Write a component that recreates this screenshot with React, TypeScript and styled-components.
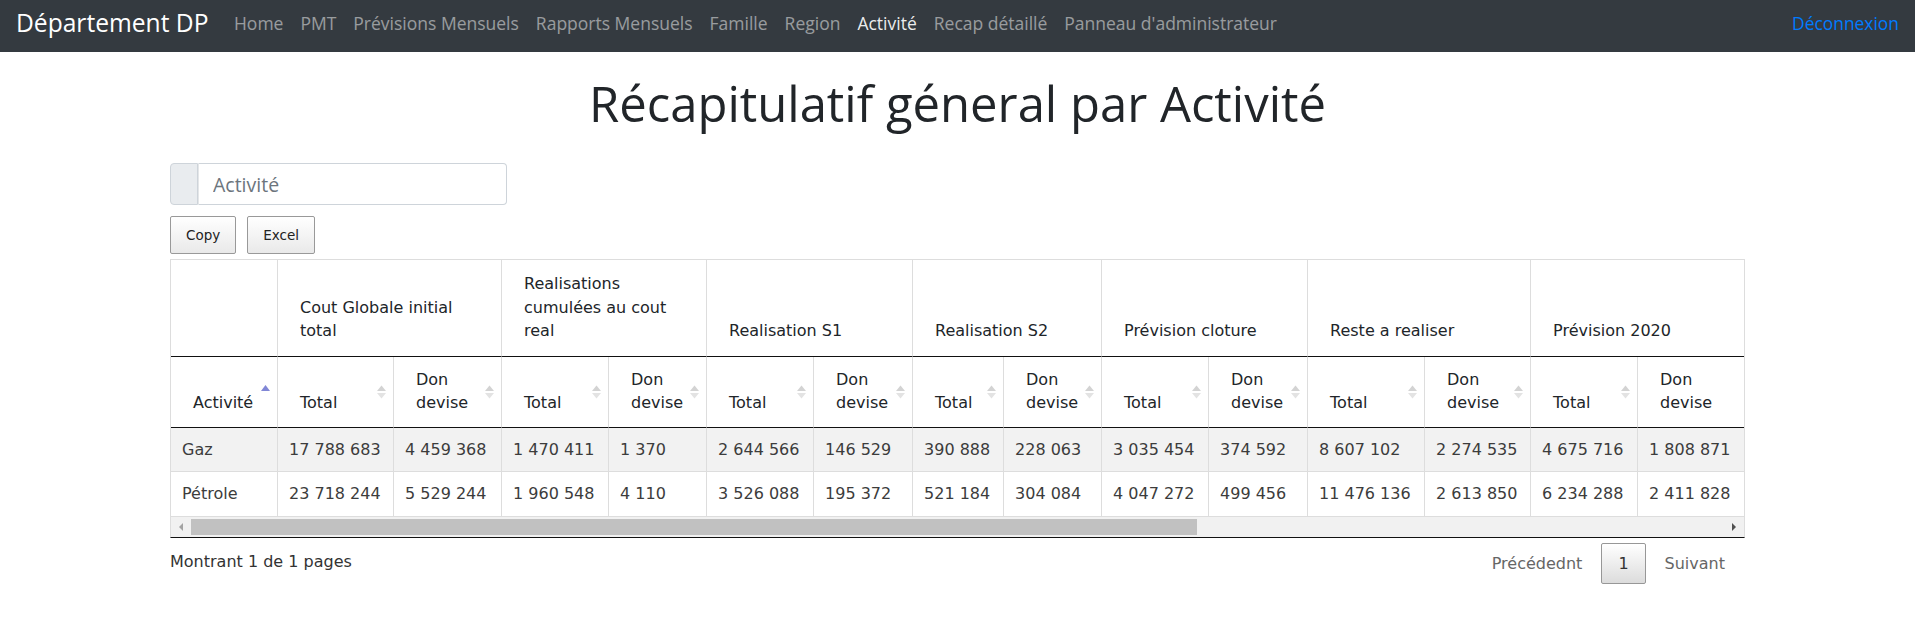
import React from 'react';
import styled, { createGlobalStyle } from 'styled-components';

const GlobalStyle = createGlobalStyle`
  html, body { margin: 0; padding: 0; background: #fff; }
  body { font-family: "Open Sans", "DejaVu Sans", sans-serif; }
  *, *::before, *::after { box-sizing: border-box; }
`;

/* ---------- Navbar ---------- */
const Navbar = styled.nav`
  height: 52px;
  background: #343a40;
  display: flex;
  align-items: center;
  padding: 0 16px 5px;
  font-family: "Open Sans", sans-serif;
`;

const Brand = styled.a`
  font-size: 24.6px;
  color: #fff;
  margin-right: 17px;
  white-space: nowrap;
  text-decoration: none;
  line-height: 1.5;
`;

const NavList = styled.ul`
  display: flex;
  list-style: none;
  margin: 0;
  padding: 0;
  flex: 1;
`;

const NavLink = styled.a<{ $active?: boolean }>`
  display: block;
  padding: 0 8.5px;
  font-size: 17.5px;
  line-height: 1.5;
  white-space: nowrap;
  text-decoration: none;
  color: ${(p) => (p.$active ? 'rgba(255,255,255,0.92)' : 'rgba(255,255,255,0.5)')};
`;

const Logout = styled.a`
  font-size: 17.4px;
  line-height: 1.5;
  color: #007bff;
  text-decoration: none;
`;

/* ---------- Page ---------- */
const Main = styled.main`
  width: 1575px;
  margin: 0 auto;
`;

const Title = styled.h1`
  font-family: "Open Sans", sans-serif;
  font-weight: 400;
  font-size: 49px;
  line-height: 57px;
  color: #212529;
  text-align: center;
  margin: 23px 0 31px;
`;

const InputGroup = styled.div`
  display: flex;
  width: 337px;
  height: 42px;
`;

const Addon = styled.span`
  width: 28px;
  background: #e9ecef;
  border: 1px solid #ced4da;
  border-radius: 4px 0 0 4px;
`;

const SearchInput = styled.input`
  flex: 1;
  min-width: 0;
  border: 1px solid #ced4da;
  border-left-color: #e4e6e8;
  border-radius: 0 4px 4px 0;
  padding: 0 14px;
  font-family: "Open Sans", sans-serif;
  font-size: 19.5px;
  color: #495057;
  outline: none;
  &::placeholder { color: #6c757d; }
`;

const ButtonBar = styled.div`
  display: flex;
  gap: 11px;
  margin: 11px 0 5px;
`;

const DtButton = styled.button`
  font-family: "DejaVu Sans", sans-serif;
  font-size: 13.5px;
  font-weight: 400;
  line-height: 20px;
  padding: 8px 15px;
  border: 1px solid #999;
  border-radius: 2px;
  background: linear-gradient(to bottom, #ffffff 0%, #e9e9e9 100%);
  color: #222;
  cursor: pointer;
`;

/* ---------- Table ---------- */
const ScrollBox = styled.div`
  border: 1px solid #ddd;
  border-bottom: 1px solid #111;
  overflow: hidden;
`;

const Table = styled.table`
  table-layout: fixed;
  width: 1597px;
  border-collapse: separate;
  border-spacing: 0;
  font-family: "DejaVu Sans", sans-serif;
  font-size: 16px;
  line-height: 23.5px;
`;

const Col = styled.col<{ $w: number }>`
  width: ${(p) => p.$w}px;
`;

const GroupTh = styled.th`
  vertical-align: bottom;
  text-align: left;
  font-weight: normal;
  color: #212529;
  padding: 12px 22px 13px;
  border-right: 1px solid #ddd;
  border-bottom: 1px solid #111;
`;

const SortTh = styled.th`
  position: relative;
  vertical-align: bottom;
  text-align: left;
  font-weight: normal;
  color: #212529;
  padding: 11px 30px 12px 22px;
  border-right: 1px solid #ddd;
  border-bottom: 1px solid #111;
  white-space: normal;
`;

const SortIcon = styled.svg`
  position: absolute;
  right: 6px;
  top: 50%;
  transform: translateY(-50%);
  width: 11px;
  height: 16px;
`;

const Row = styled.tr<{ $odd?: boolean }>`
  background: ${(p) => (p.$odd ? '#f2f2f2' : '#fff')};
`;

const Td = styled.td`
  padding: 10px 11px;
  color: #3c3c3c;
  white-space: nowrap;
  overflow: hidden;
  border-right: 1px solid #ddd;
  border-bottom: 1px solid #ddd;
`;

const ScrollBar = styled.div`
  display: flex;
  height: 20px;
  background: #f1f1f1;
`;

const ScrollArrow = styled.div`
  width: 20px;
  flex: none;
  display: flex;
  align-items: center;
  justify-content: center;
`;

const ScrollTrack = styled.div`
  flex: 1;
  display: flex;
  align-items: center;
`;

const Thumb = styled.div<{ $w: number }>`
  width: ${(p) => p.$w}px;
  height: 16px;
  background: #c1c1c1;
`;

/* ---------- Footer ---------- */
const Footer = styled.div`
  display: flex;
  justify-content: space-between;
  align-items: flex-start;
  margin-top: 5px;
  font-family: "DejaVu Sans", sans-serif;
  font-size: 16px;
  line-height: 23.5px;
`;

const Info = styled.div`
  padding-top: 7px;
  color: #333;
`;

const Pager = styled.div`
  display: flex;
  margin-right: 3px;
`;

const PageBtn = styled.a<{ $current?: boolean }>`
  display: block;
  padding: 8px 16px;
  margin-left: 2px;
  border: 1px solid ${(p) => (p.$current ? '#979797' : 'transparent')};
  border-radius: 2px;
  color: ${(p) => (p.$current ? '#333' : '#666')};
  background: ${(p) => (p.$current ? 'linear-gradient(to bottom, #ffffff 0%, #dcdcdc 100%)' : 'transparent')};
  text-decoration: none;
  cursor: default;
`;

/* ---------- Data ---------- */
const colWidths = [107, 116, 108, 107, 98, 107, 99, 91, 98, 107, 99, 117, 106, 107, 130];

const groups = [
  'Cout Globale initial total',
  'Realisations cumulées au cout real',
  'Realisation S1',
  'Realisation S2',
  'Prévision cloture',
  'Reste a realiser',
  'Prévision 2020',
];

const rows = [
  {
    name: 'Gaz',
    values: [
      '17 788 683', '4 459 368', '1 470 411', '1 370', '2 644 566', '146 529', '390 888',
      '228 063', '3 035 454', '374 592', '8 607 102', '2 274 535', '4 675 716', '1 808 871',
    ],
  },
  {
    name: 'Pétrole',
    values: [
      '23 718 244', '5 529 244', '1 960 548', '4 110', '3 526 088', '195 372', '521 184',
      '304 084', '4 047 272', '499 456', '11 476 136', '2 613 850', '6 234 288', '2 411 828',
    ],
  },
];

const navItems = [
  'Home', 'PMT', 'Prévisions Mensuels', 'Rapports Mensuels', 'Famille', 'Region',
  'Activité', 'Recap détaillé', "Panneau d'administrateur",
];

function SortBoth() {
  return (
    <SortIcon viewBox="0 0 11 16">
      <polygon points="1,7 5.5,1.5 10,7" fill="#d3d3d3" />
      <polygon points="1,9 10,9 5.5,14.5" fill="#e3e3e3" />
    </SortIcon>
  );
}

function SortAsc() {
  return (
    <SortIcon viewBox="0 0 11 16">
      <polygon points="1,7 5.5,1 10,7" fill="#8187d6" />
    </SortIcon>
  );
}

function Arrow({ dir, color }: { dir: 'left' | 'right'; color: string }) {
  return (
    <svg width="6" height="8" viewBox="0 0 6 8">
      {dir === 'left' ? (
        <polygon points="5,0 5,8 1,4" fill={color} />
      ) : (
        <polygon points="1,0 1,8 5,4" fill={color} />
      )}
    </svg>
  );
}

export default function App() {
  return (
    <>
      <GlobalStyle />
      <Navbar>
        <Brand href="#">Département DP</Brand>
        <NavList>
          {navItems.map((n) => (
            <li key={n}>
              <NavLink href="#" $active={n === 'Activité'}>{n}</NavLink>
            </li>
          ))}
        </NavList>
        <Logout href="#">Déconnexion</Logout>
      </Navbar>

      <Main>
        <Title>Récapitulatif géneral par Activité</Title>

        <InputGroup>
          <Addon />
          <SearchInput placeholder="Activité" />
        </InputGroup>

        <ButtonBar>
          <DtButton>Copy</DtButton>
          <DtButton>Excel</DtButton>
        </ButtonBar>

        <ScrollBox>
          <Table>
            <colgroup>
              {colWidths.map((w, i) => (
                <Col key={i} $w={w} />
              ))}
            </colgroup>
            <thead>
              <tr>
                <GroupTh />
                {groups.map((g) => (
                  <GroupTh key={g} colSpan={2}>{g}</GroupTh>
                ))}
              </tr>
              <tr>
                <SortTh>
                  Activité
                  <SortAsc />
                </SortTh>
                {groups.map((g) => (
                  <React.Fragment key={g}>
                    <SortTh>
                      Total
                      <SortBoth />
                    </SortTh>
                    <SortTh>
                      Don devise
                      <SortBoth />
                    </SortTh>
                  </React.Fragment>
                ))}
              </tr>
            </thead>
            <tbody>
              {rows.map((r, i) => (
                <Row key={r.name} $odd={i % 2 === 0}>
                  <Td>{r.name}</Td>
                  {r.values.map((v, j) => (
                    <Td key={j}>{v}</Td>
                  ))}
                </Row>
              ))}
            </tbody>
          </Table>
          <ScrollBar>
            <ScrollArrow>
              <Arrow dir="left" color="#a3a3a3" />
            </ScrollArrow>
            <ScrollTrack>
              <Thumb $w={1006} />
            </ScrollTrack>
            <ScrollArrow>
              <Arrow dir="right" color="#505050" />
            </ScrollArrow>
          </ScrollBar>
        </ScrollBox>

        <Footer>
          <Info>Montrant 1 de 1 pages</Info>
          <Pager>
            <PageBtn>Précédednt</PageBtn>
            <PageBtn $current>1</PageBtn>
            <PageBtn>Suivant</PageBtn>
          </Pager>
        </Footer>
      </Main>
    </>
  );
}
